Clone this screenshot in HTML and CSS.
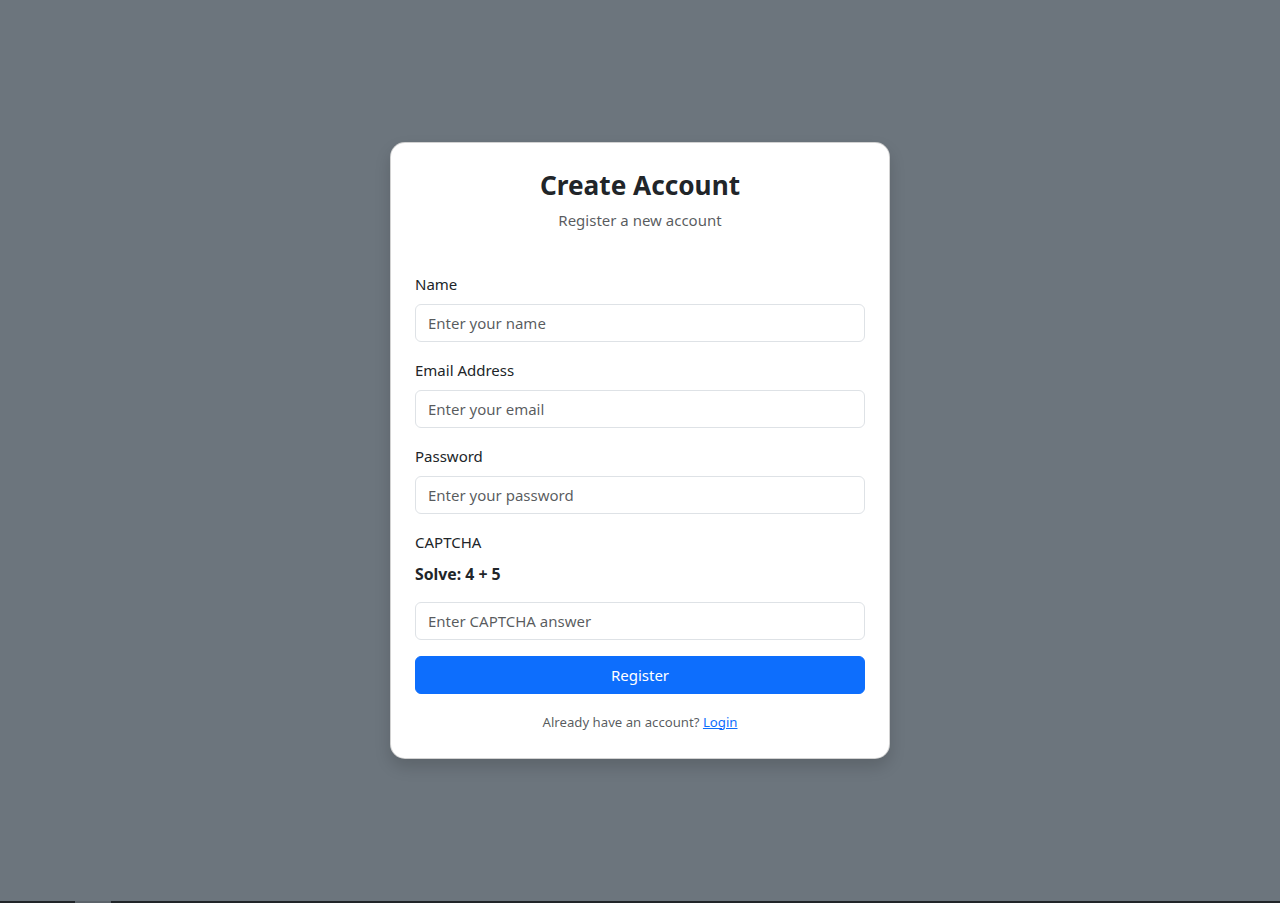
FILE: index.html
```html
<!DOCTYPE html>
<html lang="en">
<head>
<meta charset="utf-8">
<title>Create Account</title>
<link rel="stylesheet" href="styles.css">
</head>
<body>
<main class="stage">
  <section class="card">
    <header class="card-head">
      <h1 class="title">Create Account</h1>
      <p class="subtitle">Register a new account</p>
    </header>
    <form class="form">
      <div class="field">
        <label class="label" for="name">Name</label>
        <input class="input" id="name" type="text" placeholder="Enter your name">
      </div>
      <div class="field">
        <label class="label" for="email">Email Address</label>
        <input class="input" id="email" type="email" placeholder="Enter your email">
      </div>
      <div class="field">
        <label class="label" for="password">Password</label>
        <input class="input" id="password" type="password" placeholder="Enter your password">
      </div>
      <div class="field">
        <label class="label" for="captcha">CAPTCHA</label>
        <div class="captcha-q">Solve: 4 + 5</div>
        <input class="input" id="captcha" type="text" placeholder="Enter CAPTCHA answer">
      </div>
      <button class="btn" type="button">Register</button>
    </form>
    <p class="foot">Already have an account? <a href="#" class="link">Login</a></p>
  </section>
</main>
<div class="strip"><span class="thumb"></span></div>
</body>
</html>
```

FILE: styles.css
```css
* { box-sizing: border-box; }
html, body { margin: 0; padding: 0; }
body {
  font-family: "Segoe UI", "Noto Sans", "Open Sans", "Liberation Sans", sans-serif;
  font-size: 15px;
  line-height: 24px;
  color: #212529;
  background: #6c757d;
  overflow: hidden;
}
.stage {
  height: 901px;
  display: flex;
  align-items: center;
  justify-content: center;
  background: #6c757d;
}
.card {
  width: 500px;
  background: #fff;
  border: 1px solid rgba(0,0,0,.175);
  border-radius: 15px;
  padding: 24px 24px 25px;
  box-shadow: 0 8px 16px rgba(0,0,0,.15);
}
.card-head { text-align: center; margin-bottom: 40px; }
.title {
  margin: 0 0 5px;
  padding-top: 2px;
  font-size: 26.2px;
  line-height: 33.6px;
  font-weight: 700;
  color: #212529;
}
.subtitle {
  margin: 0;
  color: rgba(33,37,41,.75);
}
.form { display: flex; flex-direction: column; }
.field { margin-bottom: 16px; display: flex; flex-direction: column; }
.label { display: block; margin-bottom: 8px; }
.captcha-q { font-weight: 700; font-size: 15.8px; margin-bottom: 16px; }
.input {
  display: block;
  width: 100%;
  height: 38px;
  padding: 6px 12px;
  font: inherit;
  font-size: 15px;
  color: #212529;
  background: #fff;
  border: 1px solid #dee2e6;
  border-radius: 6px;
  outline: none;
}
.input::placeholder { color: rgba(33,37,41,.75); opacity: 1; }
.btn {
  display: block;
  width: 100%;
  height: 38px;
  font: inherit;
  color: #fff;
  background: #0d6efd;
  border: 1px solid #0d6efd;
  border-radius: 6px;
  cursor: pointer;
}
.foot {
  margin: 18px 0 0;
  text-align: center;
  font-size: 13.2px;
  line-height: 21px;
  color: rgba(33,37,41,.75);
}
.link { color: #0d6efd; text-decoration: underline; }
.strip {
  height: 2px;
  background: #212529;
  display: flex;
}
.thumb {
  width: 36px;
  margin-left: 75px;
  background: #5c636a;
}
```
